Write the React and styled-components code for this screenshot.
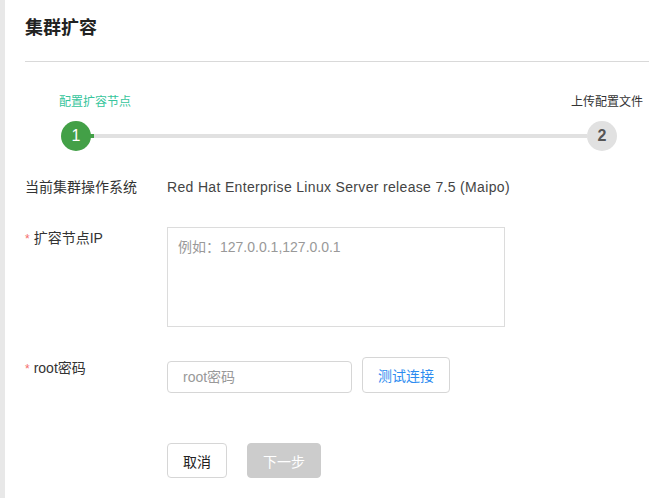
import React from "react";
import styled, { createGlobalStyle } from "styled-components";

const GlobalStyle = createGlobalStyle`
  html, body { margin: 0; padding: 0; background: #fff; }
  body {
    font-family: "Liberation Sans", "Noto Sans CJK SC", sans-serif;
    color: #333;
  }
  * { box-sizing: border-box; }
`;

const Page = styled.div`
  display: flex;
  min-height: 498px;
  border-left: 5px solid #e8e8e8;
`;

const Content = styled.div`
  flex: 1;
  padding-left: 20px;
`;

const Header = styled.div`
  padding: 16px 0 21px;
  border-bottom: 1px solid #d9d9d9;
`;

const Title = styled.h2`
  margin: 0;
  font-size: 18px;
  line-height: 24px;
  font-weight: bold;
  color: #222;
`;

const Steps = styled.div`
  margin-top: 32px;
  padding: 0 6px 0 34px;
`;

const StepLabels = styled.div`
  display: flex;
  justify-content: space-between;
`;

const StepLabel = styled.span`
  font-size: 12px;
  line-height: 16px;
  color: ${(p) => (p.$active ? "#36c59c" : "#333")};
`;

const Track = styled.div`
  display: flex;
  align-items: center;
  margin-top: 11px;
  padding: 0 26px 0 2px;
`;

const Circle = styled.div`
  position: relative;
  width: 30px;
  height: 30px;
  border-radius: 50%;
  flex: none;
  display: flex;
  align-items: center;
  justify-content: center;
  font-size: 16px;
  font-weight: ${(p) => (p.$active ? "normal" : "bold")};
  background: ${(p) => (p.$active ? "#43a047" : "#e1e1e1")};
  color: ${(p) => (p.$active ? "#fff" : "#555")};
  &::after {
    content: "";
    display: ${(p) => (p.$active ? "block" : "none")};
    position: absolute;
    right: -3px;
    top: 13px;
    width: 5px;
    height: 4px;
    background: #43a047;
  }
`;

const Line = styled.div`
  flex: 1;
  height: 4px;
  background: #e1e1e1;
`;

const Form = styled.div`
  margin-top: 26px;
  display: flex;
  flex-direction: column;
`;

const Row = styled.div`
  display: flex;
  align-items: flex-start;
  margin-top: ${(p) => p.$gap || 0}px;
`;

const Label = styled.div`
  width: 142px;
  flex: none;
  font-size: 14px;
  line-height: 20px;
  padding-top: ${(p) => p.$pt || 0}px;
  color: #333;
`;

const Star = styled.span`
  color: #f56c6c;
  margin-right: 4px;
  font-size: 12px;
`;

const Value = styled.div`
  font-size: 14px;
  line-height: 20px;
  letter-spacing: 0.33px;
  color: #444;
`;

const TextArea = styled.textarea`
  width: 338px;
  height: 100px;
  border: 1px solid #dcdcdc;
  border-radius: 0;
  padding: 9px 10px;
  resize: none;
  font-family: inherit;
  font-size: 14px;
  line-height: 20px;
  color: #333;
  outline: none;
  &::placeholder { color: #999; }
`;

const Controls = styled.div`
  display: flex;
  align-items: flex-end;
  gap: 10px;
`;

const Input = styled.input`
  width: 185px;
  height: 32px;
  border: 1px solid #d6d6d6;
  border-radius: 4px;
  padding: 0 15px;
  font-family: inherit;
  font-size: 14px;
  color: #333;
  outline: none;
  &::placeholder { color: #999; }
`;

const Button = styled.button`
  height: ${(p) => p.$h || 35}px;
  width: ${(p) => p.$w}px;
  border-radius: 4px;
  font-family: inherit;
  font-size: 14px;
  padding: 0;
  cursor: pointer;
  border: 1px solid ${(p) => (p.$disabled ? "#cccccc" : "#d6d6d6")};
  background: ${(p) => (p.$disabled ? "#cccccc" : "#fff")};
  color: ${(p) => (p.$disabled ? "#fff" : p.$link ? "#2d8cf0" : "#222")};
`;

const Actions = styled.div`
  display: flex;
  gap: 20px;
`;

export default function App() {
  return (
    <>
      <GlobalStyle />
      <Page>
        <Content>
          <Header>
            <Title>集群扩容</Title>
          </Header>
          <Steps>
            <StepLabels>
              <StepLabel $active>配置扩容节点</StepLabel>
              <StepLabel>上传配置文件</StepLabel>
            </StepLabels>
            <Track>
              <Circle $active>1</Circle>
              <Line />
              <Circle>2</Circle>
            </Track>
          </Steps>
          <Form>
            <Row>
              <Label>当前集群操作系统</Label>
              <Value>Red Hat Enterprise Linux Server release 7.5 (Maipo)</Value>
            </Row>
            <Row $gap={30}>
              <Label $pt={1}>
                <Star>*</Star>扩容节点IP
              </Label>
              <TextArea placeholder="例如：127.0.0.1,127.0.0.1" />
            </Row>
            <Row $gap={30}>
              <Label $pt={1}>
                <Star>*</Star>root密码
              </Label>
              <Controls>
                <Input type="password" placeholder="root密码" />
                <Button $w={88} $h={36} $link>测试连接</Button>
              </Controls>
            </Row>
            <Row $gap={50}>
              <Label />
              <Actions>
                <Button $w={60}>取消</Button>
                <Button $w={74} $disabled>下一步</Button>
              </Actions>
            </Row>
          </Form>
        </Content>
      </Page>
    </>
  );
}
